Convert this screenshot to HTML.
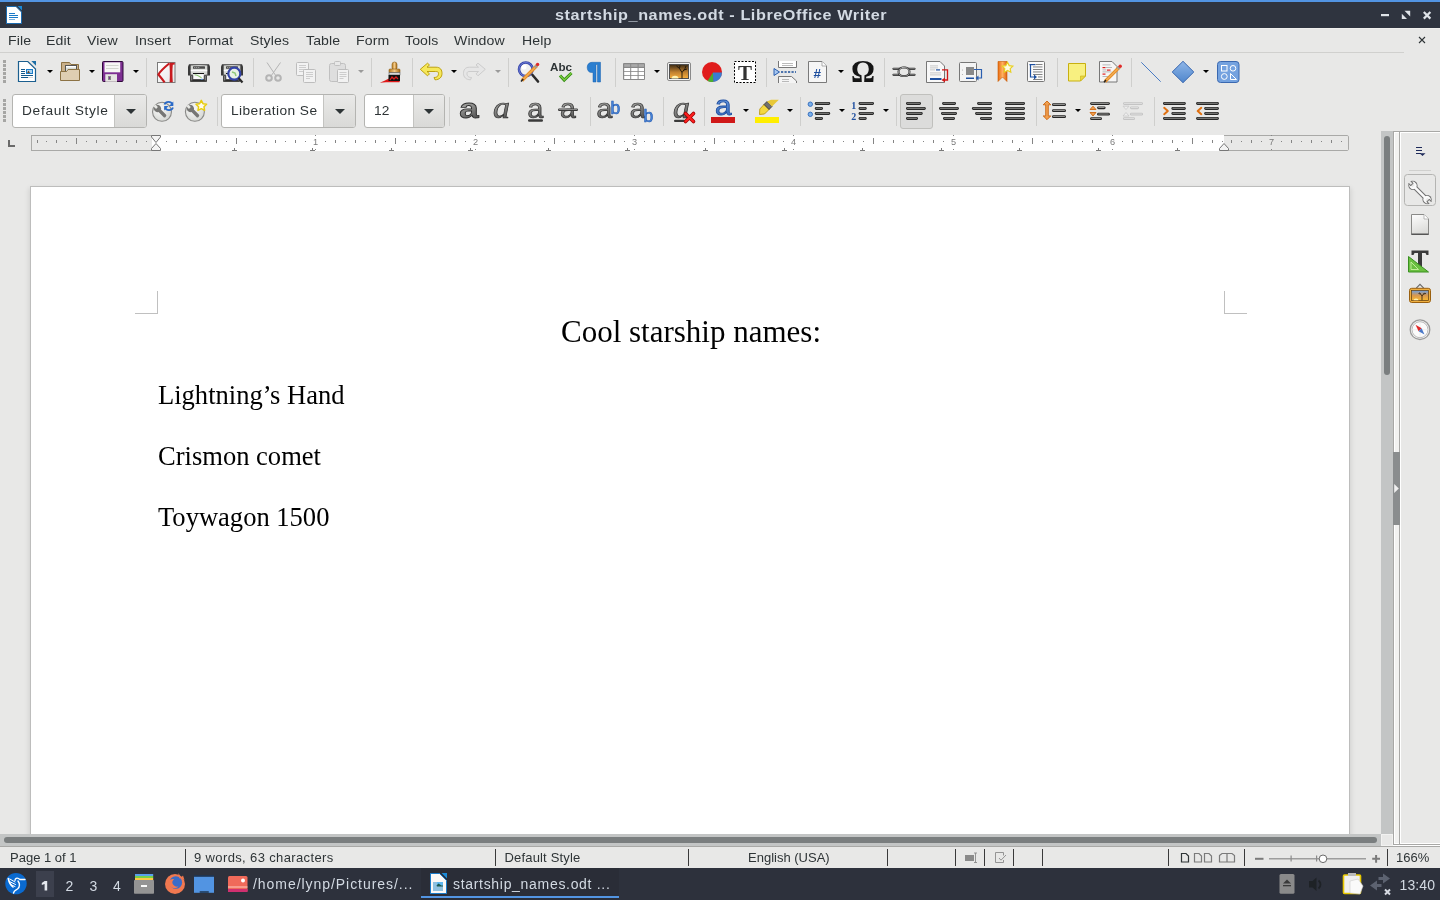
<!DOCTYPE html>
<html><head><meta charset="utf-8">
<style>
*{margin:0;padding:0;box-sizing:border-box}
html,body{width:1440px;height:900px;overflow:hidden;background:#e8e8e7;font-family:"Liberation Sans",sans-serif;position:relative}
.a{position:absolute;white-space:nowrap}
#topline{left:0;top:0;width:1440px;height:2px;background:#5294e2}
#title{left:0;top:2px;width:1440px;height:26px;background:#2f343f}
#title .t{left:554.5px;top:5.3px;color:#d3dae3;font-weight:bold;font-size:14px;letter-spacing:0.5px;transform:scaleX(1.156);transform-origin:0 0}
.mi{top:33px;font-size:13px;color:#2e3436;letter-spacing:0.1px;transform:scaleX(1.085);transform-origin:0 0}
#mline{left:0;top:52px;width:1404px;height:1px;background:#d0d0ce}
.sep{width:1px;background:#d2d2d0}
.ssep{width:1px;background:#3a3a3a;top:849px;height:17px}
.st{top:849.7px;font-size:13px;color:#2e3436}
.combo{height:34px;background:#fff;border:1px solid #b4b4b1;border-radius:3px;overflow:hidden}
.combo .btn{position:absolute;top:0;bottom:0;right:0;background:linear-gradient(#e9e9e8,#d9d9d7);border-left:1px solid #c4c4c1}
.combo .arr{position:absolute;top:14px;left:50%;margin-left:-5px;width:0;height:0;border-left:5px solid transparent;border-right:5px solid transparent;border-top:5px solid #2e3436}
.ct{font-size:12.5px;color:#2e3436;transform:scaleX(1.1);transform-origin:0 0}
.dt{font-family:"Liberation Serif",serif;font-size:26.56px;color:#000}
#taskbar{left:0;top:868px;width:1440px;height:32px;background:#2d313c}
.tb{color:#d3dae3;font-size:14px;top:876px}
</style></head><body>
<div id="root" style="position:absolute;left:0;top:0;width:1440px;height:900px;will-change:transform;background:#e8e8e7">
<div id="topline" class="a"></div>
<div id="title" class="a"><div class="t a">startship_names.odt - LibreOffice Writer</div></div>

<span class="a mi" style="left:8px">File</span>
<span class="a mi" style="left:46px">Edit</span>
<span class="a mi" style="left:87px">View</span>
<span class="a mi" style="left:135px">Insert</span>
<span class="a mi" style="left:188px">Format</span>
<span class="a mi" style="left:250px">Styles</span>
<span class="a mi" style="left:306px">Table</span>
<span class="a mi" style="left:356px">Form</span>
<span class="a mi" style="left:405px">Tools</span>
<span class="a mi" style="left:454px">Window</span>
<span class="a mi" style="left:522px">Help</span>
<div id="mline" class="a"></div>

<!-- toolbar row 2 combos -->
<div class="a combo" style="left:12px;top:94px;width:135px"><div class="btn" style="width:32px"><div class="arr"></div></div></div>
<span class="a ct" style="left:22.3px;top:104px;letter-spacing:0.6px">Default Style</span>
<div class="a combo" style="left:221px;top:94px;width:135px"><div class="btn" style="width:32px"><div class="arr"></div></div></div>
<span class="a ct" style="left:231.2px;top:104px;letter-spacing:0.38px">Liberation Se</span>
<div class="a combo" style="left:364px;top:94px;width:81px"><div class="btn" style="width:31px"><div class="arr"></div></div></div>
<span class="a ct" style="left:374px;top:104px">12</span>
<!-- align-left pressed -->
<div class="a" style="left:900px;top:94px;width:33px;height:35px;border:1px solid #c0c0bd;border-radius:3px;background:#dcdcdb"></div>

<!-- ruler -->
<div class="a" style="left:31px;top:135px;width:1318px;height:16px;background:#fff"></div>
<div class="a" style="left:31px;top:135px;width:121px;height:16px;background:#e8e8e7;border:1px solid #a9a9a7;border-right:none"></div>
<div class="a" style="left:1224px;top:135px;width:125px;height:16px;background:#e8e8e7;border:1px solid #a9a9a7;border-left:none;border-radius:0 2px 2px 0"></div>

<!-- page -->
<div class="a" style="left:30px;top:186px;width:1320px;height:660px;background:#fff;border:1px solid #bdbdbc;box-shadow:0 3px 5px 1px rgba(0,0,0,0.10)"></div>
<div class="a" style="left:135px;top:313px;width:23px;height:1px;background:#c0c0c0"></div>
<div class="a" style="left:157px;top:291px;width:1px;height:23px;background:#c0c0c0"></div>
<div class="a" style="left:1224px;top:313px;width:23px;height:1px;background:#c0c0c0"></div>
<div class="a" style="left:1224px;top:291px;width:1px;height:23px;background:#c0c0c0"></div>
<div class="a dt" style="left:561px;top:314px;font-size:31px">Cool starship names:</div>
<div class="a dt" style="left:158px;top:380px">Lightning’s Hand</div>
<div class="a dt" style="left:158px;top:441px">Crismon comet</div>
<div class="a dt" style="left:158px;top:502px">Toywagon 1500</div>

<!-- vertical scrollbar -->
<div class="a" style="left:1381px;top:131px;width:12px;height:703px;background:#c3c5c5"></div>
<div class="a" style="left:1384px;top:136px;width:6px;height:239px;background:#7a7e7f;border-radius:3px"></div>
<div class="a" style="left:1393px;top:131px;width:47px;height:714px;background:#e8e8e7;border-left:1px solid #a8a8a6;border-top:1px solid #a8a8a6;border-bottom:1px solid #a8a8a6"></div>
<div class="a" style="left:1394px;top:132px;width:46px;height:712px;border-left:1px solid #fff;border-top:1px solid #fff;border-bottom:1px solid #fff"></div>
<div class="a" style="left:1395px;top:133px;width:4px;height:710px;background:#f2f2f1"></div>
<div class="a" style="left:1399px;top:131px;width:1px;height:713px;background:#a8a8a6"></div>
<div class="a" style="left:1400px;top:132px;width:1px;height:712px;background:#fff"></div>
<div class="a" style="left:1393px;top:452px;width:7px;height:73px;background:#8a8d8e"></div>
<svg class="a" style="left:1393px;top:452px" width="7" height="73"><path d="M1.2,32V41L5.8,36.5Z" fill="#f0f0f0"/></svg>
<!-- horizontal scrollbar -->
<div class="a" style="left:0;top:834px;width:1381px;height:12px;background:#c3c5c5"></div>
<div class="a" style="left:4px;top:837px;width:1373px;height:6px;background:#7a7e7f;border-radius:3px"></div>
<div class="a" style="left:1381px;top:834px;width:12px;height:12px;background:#e8e8e7;border:1px solid #f2f2f1"></div>
<div class="a" style="left:1393px;top:845px;width:47px;height:1px;background:#fff"></div>
<div class="a" style="left:0;top:846px;width:1440px;height:1px;background:#a8a8a6"></div>

<!-- status bar -->
<div class="a" style="left:0;top:847px;width:1440px;height:21px;background:#e8e8e7"></div>
<span class="a st" style="left:10px">Page 1 of 1</span>
<div class="a ssep" style="left:185px"></div>
<span class="a st" style="left:194px;letter-spacing:0.37px">9 words, 63 characters</span>
<div class="a ssep" style="left:495px"></div>
<span class="a st" style="left:504.5px;letter-spacing:0.17px">Default Style</span>
<div class="a ssep" style="left:688px"></div>
<span class="a st" style="left:748px">English (USA)</span>
<div class="a ssep" style="left:887px"></div>
<div class="a ssep" style="left:955px"></div>
<div class="a ssep" style="left:984px"></div>
<div class="a ssep" style="left:1013px"></div>
<div class="a ssep" style="left:1042px"></div>
<div class="a ssep" style="left:1168px"></div>
<div class="a ssep" style="left:1244px"></div>
<div class="a ssep" style="left:1387px"></div>
<span class="a st" style="left:1396px">166%</span>

<!-- taskbar -->
<div id="taskbar" class="a"></div>
<div class="a" style="left:36px;top:871px;width:18px;height:26px;background:#3c404d"></div>

<span class="a tb" style="left:65.5px;top:878.3px">2</span>
<span class="a tb" style="left:89.5px;top:878.3px">3</span>
<span class="a tb" style="left:113px;top:878.3px">4</span>
<span class="a tb" style="left:253px;letter-spacing:0.95px">/home/lynp/Pictures/...</span>
<div class="a" style="left:421px;top:868px;width:198px;height:32px;background:#2a2d37"></div>
<div class="a" style="left:421px;top:896px;width:198px;height:2px;background:#5294e2"></div>
<span class="a tb" style="left:453px;letter-spacing:0.69px">startship_names.odt ...</span>
<span class="a tb" style="left:1399.6px;letter-spacing:0.1px;top:877px">13:40</span>

<svg class="a" style="left:0;top:0" width="1440" height="900" viewBox="0 0 1440 900">
<defs>
 <linearGradient id="gPr" x1="0" y1="0" x2="1" y2="0"><stop offset="0" stop-color="#3a3a3a"/><stop offset="0.2" stop-color="#9a9a9a"/><stop offset="0.5" stop-color="#e8e8e8"/><stop offset="0.8" stop-color="#9a9a9a"/><stop offset="1" stop-color="#3a3a3a"/></linearGradient>
 <linearGradient id="gGold" x1="0" y1="0" x2="1" y2="0"><stop offset="0" stop-color="#b57a1e"/><stop offset="0.5" stop-color="#f3c987"/><stop offset="1" stop-color="#a86a10"/></linearGradient>
 <linearGradient id="gGrey" x1="0" y1="0" x2="0" y2="1"><stop offset="0" stop-color="#7c7c7c"/><stop offset="1" stop-color="#3c3c3c"/></linearGradient>
</defs>
<!-- toolbar handles -->
<g fill="#a6a6a4">
 <rect x="3" y="60" width="3" height="3"/><rect x="3" y="64" width="3" height="3"/><rect x="3" y="68" width="3" height="3"/><rect x="3" y="72" width="3" height="3"/><rect x="3" y="76" width="3" height="3"/><rect x="3" y="80" width="3" height="3"/>
 <rect x="3" y="99" width="3" height="3"/><rect x="3" y="103" width="3" height="3"/><rect x="3" y="107" width="3" height="3"/><rect x="3" y="111" width="3" height="3"/><rect x="3" y="115" width="3" height="3"/><rect x="3" y="119" width="3" height="3"/>
</g>
<!-- separators row1 -->
<g fill="#cfcfcd">
 <rect x="146" y="58" width="1" height="29"/><rect x="253" y="58" width="1" height="29"/><rect x="371" y="58" width="1" height="29"/><rect x="412" y="58" width="1" height="29"/><rect x="508" y="58" width="1" height="29"/><rect x="615" y="58" width="1" height="29"/><rect x="766" y="58" width="1" height="29"/><rect x="884" y="58" width="1" height="29"/><rect x="1057" y="58" width="1" height="29"/><rect x="1131" y="58" width="1" height="29"/>
 <rect x="217" y="97" width="1" height="29"/><rect x="449" y="97" width="1" height="29"/><rect x="590" y="97" width="1" height="29"/><rect x="663" y="97" width="1" height="29"/><rect x="704" y="97" width="1" height="29"/><rect x="800" y="97" width="1" height="29"/><rect x="896" y="97" width="1" height="29"/><rect x="1036" y="97" width="1" height="29"/><rect x="1154" y="97" width="1" height="29"/>
</g>
<!-- dropdown arrows row1 -->
<g fill="#000">
 <path d="M47,70h6l-3,3z"/><path d="M89,70h6l-3,3z"/><path d="M133,70h6l-3,3z"/><path d="M451,70h6l-3,3z"/><path d="M654,70h6l-3,3z"/><path d="M838,70h6l-3,3z"/><path d="M1203,70h6l-3,3z"/>
 <path d="M743,109h6l-3,3z"/><path d="M787,109h6l-3,3z"/><path d="M839,109h6l-3,3z"/><path d="M883,109h6l-3,3z"/><path d="M1075,109h6l-3,3z"/>
</g>
<g fill="#9a9a9a"><path d="M358,70h6l-3,3z"/><path d="M495,70h6l-3,3z"/></g>

<!-- new document -->
<path d="M18.5,61.5H27.8L35.5,69V81.5H18.5Z" fill="#fff" stroke="#1b5f8f" stroke-width="1.2"/>
<path d="M31.3,61H36V65.8Z" fill="#1b6ea6"/>
<g fill="#13598c"><rect x="21" y="69" width="4" height="1"/><rect x="21" y="71" width="4" height="1"/><rect x="21" y="73" width="4" height="1"/><rect x="21" y="75" width="12" height="1"/><rect x="21" y="77" width="7" height="1"/></g>
<rect x="28" y="77" width="5" height="1" fill="#d8d8d8"/>
<rect x="26" y="69" width="7" height="5" fill="#1a7cc8"/><rect x="27" y="70" width="5" height="3" fill="#a9d2ef"/><path d="M27,73L28.5,70.5L30,73Z" fill="#6a4a30"/>
<!-- open folder -->
<path d="M61.5,80V62.5H69.5L71,64.5H78.5V72" fill="#c9b08a" stroke="#8c7244"/>
<rect x="65.5" y="65.5" width="11" height="6" fill="#fff" stroke="#555"/>
<rect x="66" y="67.5" width="10" height="3" fill="#d8dcd6"/>
<path d="M60.5,71.5H66.5L68,69.5H79.5V80.5H60.5Z" fill="#dfceb2" stroke="#8c7244"/>
<!-- save -->
<rect x="102.5" y="61.5" width="20.5" height="20" rx="1" fill="#7d2f92" stroke="#2f0a3a"/>
<rect x="104.5" y="62.3" width="15.7" height="10" fill="#f6f6f4"/>
<rect x="106" y="65" width="12.5" height="0.8" fill="#c8ccc4"/><rect x="106" y="68" width="12.5" height="0.8" fill="#c8ccc4"/>
<rect x="105.3" y="74.2" width="11.7" height="7.6" fill="#e6e6e2"/>
<rect x="108" y="76" width="3" height="4" fill="#888"/><rect x="109" y="77" width="1" height="2" fill="#7d2f92"/>
<!-- pdf -->
<defs><linearGradient id="gPdf" x1="0" y1="0" x2="1" y2="1"><stop offset="0" stop-color="#ffffff"/><stop offset="1" stop-color="#e6e6e6"/></linearGradient></defs>
<rect x="157.5" y="62.5" width="17.5" height="20" fill="url(#gPdf)" stroke="#7a7a7a"/>
<path d="M169.3,62.8H174.7V64.5L172.8,64.8C172.3,70 172.3,76 172.8,82.2H169.6C170,76 170,70 169.3,62.8Z" fill="#c81a1e"/>
<path d="M169.2,63.5C165.5,66.5 160.8,70.5 158.4,74.5C160.5,77 162.8,79.8 164.6,82.3" stroke="#c81a1e" stroke-width="2.1" fill="none"/>
<!-- print -->
<g id="printer">
<path d="M189,64.3H209L210,66.5V75.6H188V66.5Z" fill="#3a3a3a"/>
<rect x="189.5" y="65.2" width="19" height="10" fill="url(#gPr)"/>
<rect x="190.8" y="65.5" width="16.4" height="9" fill="#d6d8d4"/>
<rect x="193" y="66.2" width="12" height="2.6" rx="0.6" fill="#4a4a4a"/>
<circle cx="194.8" cy="67.5" r="0.55" fill="#c8c8c8"/><circle cx="196.8" cy="67.5" r="0.55" fill="#c8c8c8"/><circle cx="198.8" cy="67.5" r="0.55" fill="#c8c8c8"/>
<rect x="190.8" y="69.7" width="16.4" height="1.6" fill="#fafafa"/>
<path d="M190.2,75.5H206.8V81.8H190.2Z" fill="#1e1e1e"/>
<rect x="191.2" y="76" width="1.2" height="4.5" fill="#9a9a9a"/><rect x="204.6" y="76" width="1.2" height="4.5" fill="#9a9a9a"/>
<rect x="193" y="73.1" width="11" height="1" fill="#000"/>
<rect x="193.2" y="74.1" width="10.6" height="5" fill="#fafafa"/>
<path d="M194.5,74.8L197,75.3L199.5,76.5L201.5,77.8" stroke="#90c878" stroke-width="1.1" fill="none"/>
<rect x="193" y="79.1" width="11" height="1.2" fill="#555"/>
<rect x="200.8" y="78.8" width="2" height="1" fill="#4a90e2"/>
</g>
<use href="#printer" x="33" y="0"/>
<circle cx="234.3" cy="73.7" r="6" fill="#e8f0e4" stroke="#3444a8" stroke-width="2.2"/>
<path d="M232,72L235,73L236,76" stroke="#8fc77a" stroke-width="1.5" fill="none"/>
<path d="M238.5,78L242.5,82.5" stroke="#2a2a2a" stroke-width="2.2"/>
<!-- cut (disabled) -->
<g stroke="#b4b4b4" fill="none" stroke-width="1">
 <path d="M267,62.5L276,76M280.5,62.5L271,76"/>
 <circle cx="269" cy="78" r="2.8" stroke-width="2"/><circle cx="278" cy="78" r="2.8" stroke-width="2"/>
</g>
<!-- copy (disabled) -->
<rect x="296.5" y="62.5" width="12" height="13" rx="1" fill="#f2f2f2" stroke="#bdbdbd"/>
<g fill="#c4c4c4"><rect x="299" y="65" width="7" height="0.8"/><rect x="299" y="67" width="7" height="0.8"/><rect x="299" y="69" width="7" height="0.8"/><rect x="299" y="71" width="4" height="0.8"/></g>
<rect x="303.5" y="69.5" width="12" height="13" rx="1" fill="#f2f2f2" stroke="#bdbdbd"/>
<g fill="#c4c4c4"><rect x="306" y="72" width="7" height="0.8"/><rect x="306" y="74" width="7" height="0.8"/><rect x="306" y="76" width="7" height="0.8"/><rect x="306" y="78" width="4" height="0.8"/></g>
<!-- paste (disabled) -->
<rect x="329.5" y="63.5" width="16" height="18" rx="2" fill="#dedede" stroke="#c0c0c0"/>
<rect x="334.5" y="61.5" width="6" height="4" rx="1" fill="#e8e8e8" stroke="#c0c0c0"/>
<rect x="337.5" y="69.5" width="11" height="13" rx="1" fill="#f2f2f2" stroke="#bdbdbd"/>
<g fill="#c4c4c4"><rect x="339.5" y="72" width="7" height="0.8"/><rect x="339.5" y="74" width="7" height="0.8"/><rect x="339.5" y="76" width="7" height="0.8"/><rect x="339.5" y="78" width="4" height="0.8"/></g>
<!-- clone brush -->
<path d="M379.8,82.8C383,81.5 386,80 389,78.5L400,79.5L399.5,82.3H386Z" fill="#e01818"/>
<rect x="392" y="62" width="5" height="8" rx="2.5" fill="url(#gGold)" stroke="#8a5a10" stroke-width="0.6"/>
<rect x="389" y="69" width="11" height="3.5" rx="1" fill="url(#gGold)" stroke="#8a5a10" stroke-width="0.6"/>
<rect x="389" y="72.5" width="11" height="2.5" fill="#d8d8d8" stroke="#444" stroke-width="0.5"/>
<rect x="388.5" y="75" width="11.5" height="6" fill="#111"/>
<path d="M390,80L392,77L394,79L396,77L398,79" stroke="#e02020" stroke-width="1.3" fill="none"/>
<!-- undo -->
<path d="M420.3,69.3L427.5,63.2L429.5,65L427,67.2H436C440.5,67.2 442,70 442,73.5C442,77 439.5,79.8 435,79.8L434,77.5C437.5,77.5 438.5,75.5 438.5,73.5C438.5,71.8 437.5,71.5 435.5,71.5H427L429.5,73.8L427.5,75.8Z" fill="#f6e85a" stroke="#b89a00" stroke-width="0.9"/>
<!-- redo disabled -->
<path d="M485.3,69.3L478,63.2L476,65L478.5,67.2H469.5C465,67.2 463.5,70 463.5,73.5C463.5,77 466,79.8 470.5,79.8L471.5,77.5C468,77.5 467,75.5 467,73.5C467,71.8 468,71.5 470,71.5H478.5L476,73.8L478,75.8Z" fill="#e6e6e6" stroke="#c8c8c8" stroke-width="0.9"/>
<!-- find & replace -->
<circle cx="525.8" cy="69.3" r="6.8" fill="#f0f0f0" stroke="#3444a8" stroke-width="2.6"/><circle cx="525.8" cy="69.3" r="6.8" fill="none" stroke="#7a88e0" stroke-width="0.8"/>
<circle cx="524" cy="67" r="2.5" fill="#fff"/>
<path d="M532.5,75L538,81.5" stroke="#2a2a2a" stroke-width="2.6" stroke-linecap="round"/>
<path d="M522,80.5L537,65.5" stroke="#e8902a" stroke-width="3.2"/>
<path d="M522,80.5L537,65.5" stroke="#f8c070" stroke-width="1"/>
<path d="M535.3,65.3L537,67" stroke="#9a9a9a" stroke-width="3.2"/><circle cx="537.6" cy="64.4" r="1.7" fill="#e02a2a"/>
<path d="M521,81.5L523.3,79" stroke="#222" stroke-width="1.5"/>
<!-- spelling -->
<text x="550" y="71" font-family="Liberation Sans" font-weight="bold" font-size="11.6" fill="#2e3436" textLength="22" lengthAdjust="spacingAndGlyphs">Abc</text>
<path d="M560,75.5L564.2,80L571.5,73" stroke="#2f8a10" stroke-width="3" fill="none"/>
<path d="M560,75.5L564.2,80L571.5,73" stroke="#7ccc40" stroke-width="1.4" fill="none"/>
<!-- pilcrow -->
<path d="M592,62.3H600.5V82H597.5V64.5H596V82H593V72.5H591.5C589,72.5 587.2,70.5 587.2,67.5C587.2,64.5 589,62.3 592,62.3Z" fill="#2a7ed0" stroke="#1660b0" stroke-width="0.5"/>
<!-- table -->
<rect x="623" y="63" width="22" height="17" rx="1" fill="#888"/>
<g fill="#fff"><rect x="624.2" y="68" width="6" height="3.2"/><rect x="631.2" y="68" width="6.4" height="3.2"/><rect x="638.6" y="68" width="5.4" height="3.2"/>
<rect x="624.2" y="72" width="6" height="3.2"/><rect x="631.2" y="72" width="6.4" height="3.2"/><rect x="638.6" y="72" width="5.4" height="3.2"/>
<rect x="624.2" y="76" width="6" height="3"/><rect x="631.2" y="76" width="6.4" height="3"/><rect x="638.6" y="76" width="5.4" height="3"/></g>
<g fill="#aaa"><rect x="624.2" y="64.2" width="6" height="2.6"/><rect x="631.2" y="64.2" width="6.4" height="2.6"/><rect x="638.6" y="64.2" width="5.4" height="2.6"/></g>
<!-- image -->
<defs><linearGradient id="gSun" x1="0" y1="0" x2="0" y2="1"><stop offset="0" stop-color="#3a2a14"/><stop offset="0.55" stop-color="#c08030"/><stop offset="1" stop-color="#f8b040"/></linearGradient></defs>
<rect x="667.5" y="62.5" width="23" height="18" rx="1.5" fill="#f4f4f4" stroke="#8a8a8a"/>
<rect x="669.5" y="64.5" width="19" height="14" fill="url(#gSun)" stroke="#505050"/>
<path d="M671.5,78.5A3.5,2.8 0 0 1 678.5,78.5Z" fill="#fff2b0"/>
<path d="M682,78.5V72.5L679.5,68.5L676.5,66M682,72.5L685,68.5L686,66M679.5,68.5L680,65.5M684,70L687,69" stroke="#1a1208" stroke-width="0.9" fill="none"/>
<!-- chart -->
<circle cx="712" cy="72" r="10" fill="#e01c1c"/>
<path d="M713,72.5H722A9.5,9.5 0 0 1 713.2,82Z" fill="#3a7dd0"/>
<path d="M713,72.5L713.2,82A10,10 0 0 1 707.5,81Z" fill="#48b030"/>
<!-- textbox -->
<rect x="734.5" y="61.5" width="21" height="21" fill="#fff" stroke="#000" stroke-dasharray="2,1.5"/>
<text x="745" y="80" font-family="Liberation Serif" font-weight="bold" font-size="21" fill="#333" text-anchor="middle">T</text>
<!-- page break -->
<path d="M778.5,61V67.5H796.5V61" fill="#fff" stroke="#777"/>
<rect x="782" y="63" width="11" height="0.8" fill="#aaa"/><rect x="782" y="65" width="11" height="0.8" fill="#aaa"/>
<path d="M778.5,83V76.5H791.5L796.5,81V83" fill="#f4f4f4" stroke="#777"/>
<rect x="782" y="79" width="7" height="0.8" fill="#aaa"/><rect x="782" y="81" width="7" height="0.8" fill="#aaa"/>
<path d="M774,68.5L779.5,72L774,75.5Z" fill="#a8c8f0" stroke="#2a5eb0"/>
<path d="M781,72H796" stroke="#1a4e9a" stroke-width="1.6" stroke-dasharray="2.2,1.3"/>
<!-- field -->
<path d="M808.5,61.5H822L826.5,66V82.5H808.5Z" fill="#f6f6f6" stroke="#7a7a7a"/>
<path d="M822,61.5V66H826.5" fill="#fff" stroke="#999" stroke-width="0.8"/>
<text x="817.3" y="78.3" font-family="Liberation Sans" font-weight="bold" font-size="13.5" fill="#1e4e9e" text-anchor="middle">#</text>
<!-- omega -->
<text transform="translate(863.1,82) scale(0.95,1)" font-family="Liberation Serif" font-weight="bold" font-size="31.5" fill="#151515" text-anchor="middle">Ω</text>
<!-- hyperlink -->
<g fill="none" stroke-linecap="round">
<path d="M893.5,68.8H899.5M893.5,74.8H899.5M908.5,68.8H914.5M908.5,74.8H914.5" stroke="#2a2a2a" stroke-width="2.2"/>
<path d="M893.5,68.8H899.5M893.5,74.8H899.5M908.5,68.8H914.5M908.5,74.8H914.5" stroke="#b8b8b8" stroke-width="0.7"/>
<rect x="898.5" y="67.5" width="11" height="8.6" rx="4.3" stroke="#2a2a2a" stroke-width="2"/>
<rect x="898.5" y="67.5" width="11" height="8.6" rx="4.3" stroke="#c8c8c8" stroke-width="0.7"/>
</g>
<!-- footnote -->
<path d="M926.5,61.5H940L944.5,66V82.5H926.5Z" fill="#f8f8f8" stroke="#777"/>
<g fill="#bbb"><rect x="930" y="65.5" width="8" height="0.8"/><rect x="930" y="67.5" width="8" height="0.8"/><rect x="930" y="69.5" width="5" height="0.8"/><rect x="930" y="72.5" width="11" height="0.8"/><rect x="930" y="74.5" width="11" height="0.8"/></g>
<rect x="936" y="69.3" width="4" height="1.2" fill="#1e50a0"/>
<rect x="930" y="78" width="11.5" height="2" fill="#1e50a0"/>
<path d="M942,69.8H947.5V80H944" stroke="#d01818" stroke-width="1.3" fill="none"/>
<path d="M941.5,80L945,77.5V82.5Z" fill="#d01818"/>
<!-- caption -->
<rect x="959.5" y="62.5" width="17" height="19" rx="1" fill="#f4f4f4" stroke="#777"/>
<rect x="966" y="67" width="8" height="8" fill="#888"/>
<rect x="966" y="77.5" width="8" height="1.5" fill="#1e50a0"/>
<circle cx="962.5" cy="70" r="0.6" fill="#aaa"/><circle cx="962.5" cy="74.5" r="0.6" fill="#aaa"/>
<path d="M974,69.5H981.5V78H977" stroke="#2a5eb0" stroke-width="1.2" fill="none"/>
<path d="M975.5,78L978.5,75.5V80.5Z" fill="#2a5eb0"/>
<!-- bookmark -->
<defs><linearGradient id="gOr" x1="0" y1="0" x2="1" y2="0"><stop offset="0" stop-color="#e86a10"/><stop offset="0.5" stop-color="#ffb060"/><stop offset="1" stop-color="#e06010"/></linearGradient></defs>
<path d="M998,61.5H1007V81.5L1002.5,77L998,81.5Z" fill="url(#gOr)" stroke="#c85a00" stroke-width="0.6"/>
<path d="M1007.5,62.3L1009.2,65.6L1012.8,66.1L1010.2,68.6L1010.8,72.2L1007.5,70.5L1004.2,72.2L1004.8,68.6L1002.2,66.1L1005.8,65.6Z" fill="#fffbe0" stroke="#e8d020" stroke-width="1.2"/>
<!-- crossref -->
<rect x="1027.5" y="61.5" width="17" height="20" rx="1" fill="#fafafa" stroke="#777"/>
<rect x="1029.5" y="64" width="6" height="1.2" fill="#1e50a0"/>
<g fill="#777"><rect x="1036" y="64" width="6.5" height="0.9"/><rect x="1033" y="66.5" width="9.5" height="0.9"/><rect x="1033" y="69" width="9.5" height="0.9"/><rect x="1033" y="71.5" width="9.5" height="0.9"/><rect x="1033" y="74" width="9.5" height="0.9"/><rect x="1038" y="76.5" width="4.5" height="0.9"/><rect x="1033" y="79" width="9.5" height="0.9"/></g>
<path d="M1030.5,65V77H1035" stroke="#1e50a0" stroke-width="1.2" fill="none"/>
<path d="M1037,77L1034,74.5V79.5Z" fill="#1e50a0"/>
<!-- comment -->
<path d="M1068.5,63.5H1085.5V76L1080.5,81H1068.5Z" fill="#f8f080" stroke="#c8b010"/>
<path d="M1085.5,76H1080.5V81Z" fill="#e8d840" stroke="#c8b010" stroke-width="0.6"/>
<!-- track changes -->
<path d="M1099.5,61.5H1112L1117,66.5V82H1099.5Z" fill="#f6f6f6" stroke="#777"/>
<g fill="#e02020"><rect x="1102.5" y="67" width="3" height="1.2"/><rect x="1107" y="69.5" width="3.5" height="1.2"/><rect x="1102.5" y="73.5" width="3" height="1.2"/></g>
<g fill="#aaa"><rect x="1102.5" y="64.5" width="8" height="0.8"/><rect x="1106" y="67" width="6" height="0.8"/><rect x="1102.5" y="69.5" width="4" height="0.8"/><rect x="1102.5" y="71.5" width="9" height="0.8"/><rect x="1102.5" y="76" width="7" height="0.8"/></g>
<path d="M1105,81.5L1119.5,67" stroke="#e8902a" stroke-width="3.2"/>
<path d="M1105,81.5L1119.5,67" stroke="#f8c070" stroke-width="1"/>
<path d="M1117.8,68.7L1119.2,67.3" stroke="#9a9a9a" stroke-width="3.2"/><circle cx="1120.2" cy="66.3" r="1.7" fill="#e02a2a"/>
<path d="M1104,82.3L1106,80" stroke="#222" stroke-width="1.5"/>
<!-- line -->
<path d="M1141.3,62.3L1160.7,81.7" stroke="#4a7cc4" stroke-width="1"/>
<!-- diamond -->
<defs><linearGradient id="gBl" x1="0" y1="0" x2="0" y2="1"><stop offset="0" stop-color="#8fb6e8"/><stop offset="1" stop-color="#4f86cc"/></linearGradient></defs>
<path d="M1183,61.3L1193.8,72L1183,82.7L1172.2,72Z" fill="url(#gBl)" stroke="#3a68b0"/>
<!-- shapes -->
<rect x="1217.5" y="61.5" width="21.5" height="21" rx="3" fill="#74a2df" stroke="#3a68b0"/>
<g fill="none" stroke="#fff" stroke-width="1"><rect x="1221.5" y="65.5" width="5.5" height="5.5"/><circle cx="1233" cy="68.3" r="2.8"/><circle cx="1224.3" cy="76.5" r="2.9"/><path d="M1230.5,73.5V79.5H1236.5Z"/></g>
<defs>
 <linearGradient id="gA" x1="0" y1="0" x2="0.3" y2="1"><stop offset="0" stop-color="#5a5a58"/><stop offset="0.45" stop-color="#9c9c9a"/><stop offset="1" stop-color="#505050"/></linearGradient>
 <linearGradient id="gAb" x1="0" y1="0" x2="0" y2="1"><stop offset="0" stop-color="#7aa8e8"/><stop offset="1" stop-color="#2a62b8"/></linearGradient>
 <radialGradient id="gCirc" cx="0.4" cy="0.35" r="0.7"><stop offset="0" stop-color="#fafafa"/><stop offset="1" stop-color="#d4d6d2"/></radialGradient>
</defs>
<!-- update style -->
<circle cx="162" cy="111.8" r="9.5" fill="url(#gCirc)" stroke="#8a8a88" stroke-width="1.1"/>
<g transform="translate(161.5,112.5) rotate(45)" fill="#767674"><rect x="-5" y="-1.7" width="11" height="3.4" rx="1.5"/><path d="M-5,-3.6A3.6,3.6 0 1 0 -5,3.6L-5,3.6Z"/><circle cx="-5.5" cy="0" r="3.4"/></g><g transform="translate(161.5,112.5) rotate(45)" fill="#e6e7e4"><rect x="-10" y="-1.3" width="3.6" height="2.6"/></g>
<path d="M164.5,104.5A4.3,4.3 0 0 1 172.5,104.5" stroke="#2a6ac8" stroke-width="1.8" fill="none"/>
<path d="M173.3,101.5V106H169Z" fill="#2a6ac8"/>
<path d="M173,107.5A4.3,4.3 0 0 1 165,107.5" stroke="#2a6ac8" stroke-width="1.8" fill="none"/>
<path d="M164.2,110.5V106H168.5Z" fill="#2a6ac8"/>
<!-- new style -->
<circle cx="194.9" cy="111.8" r="9.5" fill="url(#gCirc)" stroke="#8a8a88" stroke-width="1.1"/>
<g transform="translate(194.4,112.5) rotate(45)" fill="#767674"><rect x="-5" y="-1.7" width="11" height="3.4" rx="1.5"/><path d="M-5,-3.6A3.6,3.6 0 1 0 -5,3.6L-5,3.6Z"/><circle cx="-5.5" cy="0" r="3.4"/></g><g transform="translate(194.4,112.5) rotate(45)" fill="#e6e7e4"><rect x="-10" y="-1.3" width="3.6" height="2.6"/></g>
<path d="M201.3,100.3L203,103.7L206.6,104.2L204,106.8L204.6,110.4L201.3,108.7L198,110.4L198.6,106.8L196,104.2L199.6,103.7Z" fill="#fffde8" stroke="#e8cc10" stroke-width="1.5" stroke-linejoin="round"/>
<!-- bold a -->
<text transform="translate(459.2,117.6) scale(1.27,1)" font-family="Liberation Sans" font-weight="bold" font-size="27.5" fill="url(#gA)" stroke="#2e2e2e" stroke-width="0.8">a</text>
<!-- italic a -->
<text transform="translate(493,117.6) scale(1.06,1)" font-family="Liberation Serif" font-style="italic" font-size="32" fill="url(#gA)" stroke="#2e2e2e" stroke-width="0.7">a</text>
<!-- underline a -->
<text transform="translate(527.5,117.6) scale(1.05,1)" font-family="Liberation Sans" font-size="27" fill="url(#gA)" stroke="#2e2e2e" stroke-width="0.7">a</text>
<rect x="528" y="119.3" width="15" height="2.4" rx="1.2" fill="#3a3a3a"/>
<!-- strike a -->
<text transform="translate(560,117.6) scale(1.05,1)" font-family="Liberation Sans" font-size="27" fill="url(#gA)" stroke="#2e2e2e" stroke-width="0.7">a</text>
<rect x="558" y="108.5" width="20" height="2.4" rx="1.2" fill="#3a3a3a"/>
<rect x="559" y="109" width="18" height="0.8" fill="#9a9a9a"/>
<!-- superscript -->
<text transform="translate(596.5,117.6) scale(1.05,1)" font-family="Liberation Sans" font-size="27" fill="url(#gA)" stroke="#2e2e2e" stroke-width="0.7">a</text>
<text transform="translate(610.5,113.5) scale(0.95,1)" font-family="Liberation Sans" font-size="18.5" fill="#4a86d8" stroke="#1e56b0" stroke-width="0.6">b</text>
<!-- subscript -->
<text transform="translate(629.8,117.6) scale(1.05,1)" font-family="Liberation Sans" font-size="27" fill="url(#gA)" stroke="#2e2e2e" stroke-width="0.7">a</text>
<text transform="translate(643.5,121.8) scale(0.95,1)" font-family="Liberation Sans" font-size="18.5" fill="#4a86d8" stroke="#1e56b0" stroke-width="0.6">b</text>
<!-- clear formatting -->
<text transform="translate(673,117.6) scale(1.06,1)" font-family="Liberation Serif" font-style="italic" font-size="32" fill="url(#gA)" stroke="#2e2e2e" stroke-width="0.7">a</text>
<rect x="674" y="119.8" width="11" height="2.2" rx="1.1" fill="#3a3a3a"/>
<path d="M685.5,113.5L693.5,121.5M693.5,113.5L685.5,121.5" stroke="#a00000" stroke-width="3.6" stroke-linecap="round"/>
<path d="M685.5,113.5L693.5,121.5M693.5,113.5L685.5,121.5" stroke="#ff2020" stroke-width="2" stroke-linecap="round"/>
<!-- font color -->
<text transform="translate(715,114.8) scale(1.1,1)" font-family="Liberation Sans" font-size="27" fill="url(#gAb)" stroke="#1e4ea0" stroke-width="0.8">a</text>
<rect x="711" y="117" width="24" height="6" fill="#d01818"/>
<!-- highlighting -->
<path d="M759.5,114.5L759.8,109L764.5,104L769.5,109L764.5,114Z" fill="#f4d840" stroke="#b89000" stroke-width="0.8"/>
<path d="M764,104.5L767,101.5L772,106.5L769,109.5Z" fill="#707070" stroke="#303030" stroke-width="0.8"/>
<path d="M767,101.5L771,99.8H778.8L772,106.5Z" fill="#e8c838"/>
<rect x="755" y="117" width="24" height="6" fill="#ffee00"/>

<rect x="814.8" y="102.1" width="15.4" height="2.8" rx="1.4" fill="#262626"/>
<rect x="815.8" y="102.8" width="13.4" height="1.0" rx="0.5" fill="#8e8e8c"/>
<rect x="814.8" y="107.1" width="8.2" height="2.8" rx="1.4" fill="#262626"/>
<rect x="815.8" y="107.8" width="6.2" height="1.0" rx="0.5" fill="#8e8e8c"/>
<rect x="814.8" y="112.1" width="15.4" height="2.8" rx="1.4" fill="#262626"/>
<rect x="815.8" y="112.8" width="13.4" height="1.0" rx="0.5" fill="#8e8e8c"/>
<rect x="814.8" y="117.1" width="8.2" height="2.8" rx="1.4" fill="#262626"/>
<rect x="815.8" y="117.8" width="6.2" height="1.0" rx="0.5" fill="#8e8e8c"/>
<g fill="#7ab0ea" stroke="#3a72c0" stroke-width="1"><circle cx="810.3" cy="104.2" r="2.2"/><circle cx="810.3" cy="114.3" r="2.2"/></g>
<rect x="858.6" y="102.1" width="15.4" height="2.8" rx="1.4" fill="#262626"/>
<rect x="859.6" y="102.8" width="13.4" height="1.0" rx="0.5" fill="#8e8e8c"/>
<rect x="858.6" y="107.1" width="8.1" height="2.8" rx="1.4" fill="#262626"/>
<rect x="859.6" y="107.8" width="6.1" height="1.0" rx="0.5" fill="#8e8e8c"/>
<rect x="858.6" y="112.1" width="15.4" height="2.8" rx="1.4" fill="#262626"/>
<rect x="859.6" y="112.8" width="13.4" height="1.0" rx="0.5" fill="#8e8e8c"/>
<rect x="858.6" y="117.1" width="8.1" height="2.8" rx="1.4" fill="#262626"/>
<rect x="859.6" y="117.8" width="6.1" height="1.0" rx="0.5" fill="#8e8e8c"/>
<text x="853.8" y="108.8" font-family="Liberation Serif" font-weight="bold" font-size="10" fill="#2050a0" text-anchor="middle">1</text>
<text x="853.8" y="120" font-family="Liberation Serif" font-weight="bold" font-size="10" fill="#2050a0" text-anchor="middle">2</text>
<rect x="906.0" y="102.1" width="15.0" height="2.8" rx="1.4" fill="#262626"/>
<rect x="907.0" y="102.8" width="13.0" height="1.0" rx="0.5" fill="#8e8e8c"/>
<rect x="906.0" y="107.1" width="19.8" height="2.8" rx="1.4" fill="#262626"/>
<rect x="907.0" y="107.8" width="17.8" height="1.0" rx="0.5" fill="#8e8e8c"/>
<rect x="906.0" y="112.1" width="16.7" height="2.8" rx="1.4" fill="#262626"/>
<rect x="907.0" y="112.8" width="14.7" height="1.0" rx="0.5" fill="#8e8e8c"/>
<rect x="906.0" y="117.1" width="12.0" height="2.8" rx="1.4" fill="#262626"/>
<rect x="907.0" y="117.8" width="10.0" height="1.0" rx="0.5" fill="#8e8e8c"/>
<rect x="942.1" y="102.1" width="13.9" height="2.8" rx="1.4" fill="#262626"/>
<rect x="943.1" y="102.8" width="11.9" height="1.0" rx="0.5" fill="#8e8e8c"/>
<rect x="939.0" y="107.1" width="19.9" height="2.8" rx="1.4" fill="#262626"/>
<rect x="940.0" y="107.8" width="17.9" height="1.0" rx="0.5" fill="#8e8e8c"/>
<rect x="941.0" y="112.1" width="16.0" height="2.8" rx="1.4" fill="#262626"/>
<rect x="942.0" y="112.8" width="14.0" height="1.0" rx="0.5" fill="#8e8e8c"/>
<rect x="943.0" y="117.1" width="12.0" height="2.8" rx="1.4" fill="#262626"/>
<rect x="944.0" y="117.8" width="10.0" height="1.0" rx="0.5" fill="#8e8e8c"/>
<rect x="977.1" y="102.1" width="14.9" height="2.8" rx="1.4" fill="#262626"/>
<rect x="978.1" y="102.8" width="12.9" height="1.0" rx="0.5" fill="#8e8e8c"/>
<rect x="971.9" y="107.1" width="20.1" height="2.8" rx="1.4" fill="#262626"/>
<rect x="972.9" y="107.8" width="18.1" height="1.0" rx="0.5" fill="#8e8e8c"/>
<rect x="975.1" y="112.1" width="16.9" height="2.8" rx="1.4" fill="#262626"/>
<rect x="976.1" y="112.8" width="14.9" height="1.0" rx="0.5" fill="#8e8e8c"/>
<rect x="980.0" y="117.1" width="12.0" height="2.8" rx="1.4" fill="#262626"/>
<rect x="981.0" y="117.8" width="10.0" height="1.0" rx="0.5" fill="#8e8e8c"/>
<rect x="1005.0" y="102.1" width="20.0" height="2.8" rx="1.4" fill="#262626"/>
<rect x="1006.0" y="102.8" width="18.0" height="1.0" rx="0.5" fill="#8e8e8c"/>
<rect x="1005.0" y="107.1" width="20.0" height="2.8" rx="1.4" fill="#262626"/>
<rect x="1006.0" y="107.8" width="18.0" height="1.0" rx="0.5" fill="#8e8e8c"/>
<rect x="1005.0" y="112.1" width="20.0" height="2.8" rx="1.4" fill="#262626"/>
<rect x="1006.0" y="112.8" width="18.0" height="1.0" rx="0.5" fill="#8e8e8c"/>
<rect x="1005.0" y="117.1" width="20.0" height="2.8" rx="1.4" fill="#262626"/>
<rect x="1006.0" y="117.8" width="18.0" height="1.0" rx="0.5" fill="#8e8e8c"/>
<rect x="1052.0" y="103.3" width="14.0" height="2.8" rx="1.4" fill="#262626"/>
<rect x="1053.0" y="104.0" width="12.0" height="1.0" rx="0.5" fill="#8e8e8c"/>
<rect x="1052.0" y="109.3" width="14.0" height="2.8" rx="1.4" fill="#262626"/>
<rect x="1053.0" y="110.0" width="12.0" height="1.0" rx="0.5" fill="#8e8e8c"/>
<rect x="1052.0" y="115.3" width="14.0" height="2.8" rx="1.4" fill="#262626"/>
<rect x="1053.0" y="116.0" width="12.0" height="1.0" rx="0.5" fill="#8e8e8c"/>
<path d="M1047,101L1050.8,104.8H1048.3V115.9H1050.8L1047,119.7L1043.2,115.9H1045.7V104.8H1043.2Z" fill="#f0a050" stroke="#c85a00" stroke-width="0.8"/>
<rect x="1090.1" y="102.2" width="19.8" height="2.8" rx="1.4" fill="#262626"/>
<rect x="1091.1" y="102.9" width="17.8" height="1.0" rx="0.5" fill="#8e8e8c"/>
<rect x="1097.1" y="106.4" width="8.5" height="2.8" rx="1.4" fill="#262626"/>
<rect x="1098.1" y="107.1" width="6.5" height="1.0" rx="0.5" fill="#8e8e8c"/>
<rect x="1097.1" y="112.8" width="12.8" height="2.8" rx="1.4" fill="#262626"/>
<rect x="1098.1" y="113.5" width="10.8" height="1.0" rx="0.5" fill="#8e8e8c"/>
<rect x="1090.1" y="117.3" width="11.9" height="2.8" rx="1.4" fill="#262626"/>
<rect x="1091.1" y="118.0" width="9.9" height="1.0" rx="0.5" fill="#8e8e8c"/>
<path d="M1093,106.2L1096,109.5H1090Z" fill="#f0a050" stroke="#c85a00" stroke-width="0.8"/>
<path d="M1093,116L1096,112.5H1090Z" fill="#f0a050" stroke="#c85a00" stroke-width="0.8"/>
<rect x="1123.0" y="102.2" width="20.0" height="2.8" rx="1.4" fill="#c4c4c4"/>
<rect x="1124.0" y="103.0" width="18.0" height="0.9" fill="#e0e0e0"/>
<rect x="1130.0" y="106.4" width="9.0" height="2.8" rx="1.4" fill="#c4c4c4"/>
<rect x="1131.0" y="107.2" width="7.0" height="0.9" fill="#e0e0e0"/>
<rect x="1130.0" y="112.8" width="13.0" height="2.8" rx="1.4" fill="#c4c4c4"/>
<rect x="1131.0" y="113.6" width="11.0" height="0.9" fill="#e0e0e0"/>
<rect x="1123.0" y="117.3" width="12.0" height="2.8" rx="1.4" fill="#c4c4c4"/>
<rect x="1124.0" y="118.1" width="10.0" height="0.9" fill="#e0e0e0"/>
<path d="M1126,109.5L1129,106.2H1123Z" fill="#eee" stroke="#c8c8c8" stroke-width="0.8"/>
<path d="M1126,112.5L1129,116H1123Z" fill="#eee" stroke="#c8c8c8" stroke-width="0.8"/>
<rect x="1163.0" y="102.1" width="22.8" height="2.8" rx="1.4" fill="#262626"/>
<rect x="1164.0" y="102.8" width="20.8" height="1.0" rx="0.5" fill="#8e8e8c"/>
<rect x="1171.4" y="107.1" width="14.4" height="2.8" rx="1.4" fill="#262626"/>
<rect x="1172.4" y="107.8" width="12.4" height="1.0" rx="0.5" fill="#8e8e8c"/>
<rect x="1171.4" y="112.1" width="14.4" height="2.8" rx="1.4" fill="#262626"/>
<rect x="1172.4" y="112.8" width="12.4" height="1.0" rx="0.5" fill="#8e8e8c"/>
<rect x="1163.0" y="117.1" width="22.8" height="2.8" rx="1.4" fill="#262626"/>
<rect x="1164.0" y="117.8" width="20.8" height="1.0" rx="0.5" fill="#8e8e8c"/>
<path d="M1164.2,107.8L1167.8,111L1164.2,114.2" stroke="#e07010" stroke-width="2" fill="none" stroke-linecap="round" stroke-linejoin="round"/>
<rect x="1196.1" y="102.1" width="22.8" height="2.8" rx="1.4" fill="#262626"/>
<rect x="1197.1" y="102.8" width="20.8" height="1.0" rx="0.5" fill="#8e8e8c"/>
<rect x="1204.2" y="107.1" width="14.7" height="2.8" rx="1.4" fill="#262626"/>
<rect x="1205.2" y="107.8" width="12.7" height="1.0" rx="0.5" fill="#8e8e8c"/>
<rect x="1204.2" y="112.1" width="14.7" height="2.8" rx="1.4" fill="#262626"/>
<rect x="1205.2" y="112.8" width="12.7" height="1.0" rx="0.5" fill="#8e8e8c"/>
<rect x="1196.1" y="117.1" width="22.8" height="2.8" rx="1.4" fill="#262626"/>
<rect x="1197.1" y="117.8" width="20.8" height="1.0" rx="0.5" fill="#8e8e8c"/>
<path d="M1201.3,107.8L1197.7,111L1201.3,114.2" stroke="#e07010" stroke-width="2" fill="none" stroke-linecap="round" stroke-linejoin="round"/>
<rect x="37" y="140" width="1" height="3" fill="#858585"/>
<rect x="46" y="141" width="1" height="1" fill="#858585"/>
<rect x="56" y="140" width="1" height="3" fill="#858585"/>
<rect x="66" y="141" width="1" height="1" fill="#858585"/>
<rect x="76" y="138" width="1" height="6" fill="#858585"/>
<rect x="86" y="141" width="1" height="1" fill="#858585"/>
<rect x="96" y="140" width="1" height="3" fill="#858585"/>
<rect x="106" y="141" width="1" height="1" fill="#858585"/>
<rect x="116" y="140" width="1" height="3" fill="#858585"/>
<rect x="126" y="141" width="1" height="1" fill="#858585"/>
<rect x="136" y="140" width="1" height="3" fill="#858585"/>
<rect x="146" y="141" width="1" height="1" fill="#858585"/>
<rect x="166" y="141" width="1" height="1" fill="#858585"/>
<rect x="176" y="140" width="1" height="3" fill="#858585"/>
<rect x="186" y="141" width="1" height="1" fill="#858585"/>
<rect x="196" y="140" width="1" height="3" fill="#858585"/>
<rect x="206" y="141" width="1" height="1" fill="#858585"/>
<rect x="216" y="140" width="1" height="3" fill="#858585"/>
<rect x="226" y="141" width="1" height="1" fill="#858585"/>
<rect x="236" y="138" width="1" height="6" fill="#858585"/>
<rect x="246" y="141" width="1" height="1" fill="#858585"/>
<rect x="256" y="140" width="1" height="3" fill="#858585"/>
<rect x="266" y="141" width="1" height="1" fill="#858585"/>
<rect x="275" y="140" width="1" height="3" fill="#858585"/>
<rect x="285" y="141" width="1" height="1" fill="#858585"/>
<rect x="295" y="140" width="1" height="3" fill="#858585"/>
<rect x="305" y="141" width="1" height="1" fill="#858585"/>
<text x="315.5" y="144.8" font-family="Liberation Sans" font-size="9.2" fill="#7a7a7a" text-anchor="middle">1</text>
<rect x="315" y="135" width="1" height="1" fill="#858585"/><rect x="315" y="149" width="1" height="1" fill="#858585"/>
<rect x="325" y="141" width="1" height="1" fill="#858585"/>
<rect x="335" y="140" width="1" height="3" fill="#858585"/>
<rect x="345" y="141" width="1" height="1" fill="#858585"/>
<rect x="355" y="140" width="1" height="3" fill="#858585"/>
<rect x="365" y="141" width="1" height="1" fill="#858585"/>
<rect x="375" y="140" width="1" height="3" fill="#858585"/>
<rect x="385" y="141" width="1" height="1" fill="#858585"/>
<rect x="395" y="138" width="1" height="6" fill="#858585"/>
<rect x="405" y="141" width="1" height="1" fill="#858585"/>
<rect x="415" y="140" width="1" height="3" fill="#858585"/>
<rect x="425" y="141" width="1" height="1" fill="#858585"/>
<rect x="435" y="140" width="1" height="3" fill="#858585"/>
<rect x="445" y="141" width="1" height="1" fill="#858585"/>
<rect x="455" y="140" width="1" height="3" fill="#858585"/>
<rect x="465" y="141" width="1" height="1" fill="#858585"/>
<text x="475.5" y="144.8" font-family="Liberation Sans" font-size="9.2" fill="#7a7a7a" text-anchor="middle">2</text>
<rect x="475" y="135" width="1" height="1" fill="#858585"/><rect x="475" y="149" width="1" height="1" fill="#858585"/>
<rect x="485" y="141" width="1" height="1" fill="#858585"/>
<rect x="495" y="140" width="1" height="3" fill="#858585"/>
<rect x="505" y="141" width="1" height="1" fill="#858585"/>
<rect x="514" y="140" width="1" height="3" fill="#858585"/>
<rect x="524" y="141" width="1" height="1" fill="#858585"/>
<rect x="534" y="140" width="1" height="3" fill="#858585"/>
<rect x="544" y="141" width="1" height="1" fill="#858585"/>
<rect x="554" y="138" width="1" height="6" fill="#858585"/>
<rect x="564" y="141" width="1" height="1" fill="#858585"/>
<rect x="574" y="140" width="1" height="3" fill="#858585"/>
<rect x="584" y="141" width="1" height="1" fill="#858585"/>
<rect x="594" y="140" width="1" height="3" fill="#858585"/>
<rect x="604" y="141" width="1" height="1" fill="#858585"/>
<rect x="614" y="140" width="1" height="3" fill="#858585"/>
<rect x="624" y="141" width="1" height="1" fill="#858585"/>
<text x="634.5" y="144.8" font-family="Liberation Sans" font-size="9.2" fill="#7a7a7a" text-anchor="middle">3</text>
<rect x="634" y="135" width="1" height="1" fill="#858585"/><rect x="634" y="149" width="1" height="1" fill="#858585"/>
<rect x="644" y="141" width="1" height="1" fill="#858585"/>
<rect x="654" y="140" width="1" height="3" fill="#858585"/>
<rect x="664" y="141" width="1" height="1" fill="#858585"/>
<rect x="674" y="140" width="1" height="3" fill="#858585"/>
<rect x="684" y="141" width="1" height="1" fill="#858585"/>
<rect x="694" y="140" width="1" height="3" fill="#858585"/>
<rect x="704" y="141" width="1" height="1" fill="#858585"/>
<rect x="714" y="138" width="1" height="6" fill="#858585"/>
<rect x="724" y="141" width="1" height="1" fill="#858585"/>
<rect x="734" y="140" width="1" height="3" fill="#858585"/>
<rect x="744" y="141" width="1" height="1" fill="#858585"/>
<rect x="753" y="140" width="1" height="3" fill="#858585"/>
<rect x="763" y="141" width="1" height="1" fill="#858585"/>
<rect x="773" y="140" width="1" height="3" fill="#858585"/>
<rect x="783" y="141" width="1" height="1" fill="#858585"/>
<text x="793.5" y="144.8" font-family="Liberation Sans" font-size="9.2" fill="#7a7a7a" text-anchor="middle">4</text>
<rect x="793" y="135" width="1" height="1" fill="#858585"/><rect x="793" y="149" width="1" height="1" fill="#858585"/>
<rect x="803" y="141" width="1" height="1" fill="#858585"/>
<rect x="813" y="140" width="1" height="3" fill="#858585"/>
<rect x="823" y="141" width="1" height="1" fill="#858585"/>
<rect x="833" y="140" width="1" height="3" fill="#858585"/>
<rect x="843" y="141" width="1" height="1" fill="#858585"/>
<rect x="853" y="140" width="1" height="3" fill="#858585"/>
<rect x="863" y="141" width="1" height="1" fill="#858585"/>
<rect x="873" y="138" width="1" height="6" fill="#858585"/>
<rect x="883" y="141" width="1" height="1" fill="#858585"/>
<rect x="893" y="140" width="1" height="3" fill="#858585"/>
<rect x="903" y="141" width="1" height="1" fill="#858585"/>
<rect x="913" y="140" width="1" height="3" fill="#858585"/>
<rect x="923" y="141" width="1" height="1" fill="#858585"/>
<rect x="933" y="140" width="1" height="3" fill="#858585"/>
<rect x="943" y="141" width="1" height="1" fill="#858585"/>
<text x="953.5" y="144.8" font-family="Liberation Sans" font-size="9.2" fill="#7a7a7a" text-anchor="middle">5</text>
<rect x="953" y="135" width="1" height="1" fill="#858585"/><rect x="953" y="149" width="1" height="1" fill="#858585"/>
<rect x="963" y="141" width="1" height="1" fill="#858585"/>
<rect x="973" y="140" width="1" height="3" fill="#858585"/>
<rect x="983" y="141" width="1" height="1" fill="#858585"/>
<rect x="992" y="140" width="1" height="3" fill="#858585"/>
<rect x="1002" y="141" width="1" height="1" fill="#858585"/>
<rect x="1012" y="140" width="1" height="3" fill="#858585"/>
<rect x="1022" y="141" width="1" height="1" fill="#858585"/>
<rect x="1032" y="138" width="1" height="6" fill="#858585"/>
<rect x="1042" y="141" width="1" height="1" fill="#858585"/>
<rect x="1052" y="140" width="1" height="3" fill="#858585"/>
<rect x="1062" y="141" width="1" height="1" fill="#858585"/>
<rect x="1072" y="140" width="1" height="3" fill="#858585"/>
<rect x="1082" y="141" width="1" height="1" fill="#858585"/>
<rect x="1092" y="140" width="1" height="3" fill="#858585"/>
<rect x="1102" y="141" width="1" height="1" fill="#858585"/>
<text x="1112.5" y="144.8" font-family="Liberation Sans" font-size="9.2" fill="#7a7a7a" text-anchor="middle">6</text>
<rect x="1112" y="135" width="1" height="1" fill="#858585"/><rect x="1112" y="149" width="1" height="1" fill="#858585"/>
<rect x="1122" y="141" width="1" height="1" fill="#858585"/>
<rect x="1132" y="140" width="1" height="3" fill="#858585"/>
<rect x="1142" y="141" width="1" height="1" fill="#858585"/>
<rect x="1152" y="140" width="1" height="3" fill="#858585"/>
<rect x="1162" y="141" width="1" height="1" fill="#858585"/>
<rect x="1172" y="140" width="1" height="3" fill="#858585"/>
<rect x="1182" y="141" width="1" height="1" fill="#858585"/>
<rect x="1192" y="138" width="1" height="6" fill="#858585"/>
<rect x="1202" y="141" width="1" height="1" fill="#858585"/>
<rect x="1212" y="140" width="1" height="3" fill="#858585"/>
<rect x="1222" y="141" width="1" height="1" fill="#858585"/>
<rect x="1231" y="140" width="1" height="3" fill="#858585"/>
<rect x="1241" y="141" width="1" height="1" fill="#858585"/>
<rect x="1251" y="140" width="1" height="3" fill="#858585"/>
<rect x="1261" y="141" width="1" height="1" fill="#858585"/>
<text x="1271.5" y="144.8" font-family="Liberation Sans" font-size="9.2" fill="#7a7a7a" text-anchor="middle">7</text>
<rect x="1271" y="135" width="1" height="1" fill="#858585"/><rect x="1271" y="149" width="1" height="1" fill="#858585"/>
<rect x="1281" y="141" width="1" height="1" fill="#858585"/>
<rect x="1291" y="140" width="1" height="3" fill="#858585"/>
<rect x="1301" y="141" width="1" height="1" fill="#858585"/>
<rect x="1311" y="140" width="1" height="3" fill="#858585"/>
<rect x="1321" y="141" width="1" height="1" fill="#858585"/>
<rect x="1331" y="140" width="1" height="3" fill="#858585"/>
<rect x="1341" y="141" width="1" height="1" fill="#858585"/>
<path d="M234.5,148V151M232,150.5H237" stroke="#7a7a7a" stroke-width="1"/>
<path d="M312.5,148V151M310,150.5H315" stroke="#7a7a7a" stroke-width="1"/>
<path d="M391.5,148V151M389,150.5H394" stroke="#7a7a7a" stroke-width="1"/>
<path d="M470.5,148V151M468,150.5H473" stroke="#7a7a7a" stroke-width="1"/>
<path d="M548.5,148V151M546,150.5H551" stroke="#7a7a7a" stroke-width="1"/>
<path d="M627.5,148V151M625,150.5H630" stroke="#7a7a7a" stroke-width="1"/>
<path d="M705.5,148V151M703,150.5H708" stroke="#7a7a7a" stroke-width="1"/>
<path d="M784.5,148V151M782,150.5H787" stroke="#7a7a7a" stroke-width="1"/>
<path d="M862.5,148V151M860,150.5H865" stroke="#7a7a7a" stroke-width="1"/>
<path d="M941.5,148V151M939,150.5H944" stroke="#7a7a7a" stroke-width="1"/>
<path d="M1019.5,148V151M1017,150.5H1022" stroke="#7a7a7a" stroke-width="1"/>
<path d="M1098.5,148V151M1096,150.5H1101" stroke="#7a7a7a" stroke-width="1"/>
<path d="M1177.5,148V151M1175,150.5H1180" stroke="#7a7a7a" stroke-width="1"/>
<path d="M151.5,135.5H160.5V137L156,142.5L151.5,137Z" fill="#f4f4f4" stroke="#777"/>
<path d="M156,143.5L160.5,148.5V150.5H151.5V148.5Z" fill="#f4f4f4" stroke="#777"/>
<path d="M1224,143.5L1228.5,148.5V150.5H1219.5V148.5Z" fill="#f4f4f4" stroke="#777"/>
<path d="M9,140V146H15" stroke="#6a6a6a" stroke-width="2" fill="none"/>
<!-- title bar LibreOffice icon -->
<path d="M6.5,6.5H16L21.5,12V23.5H6.5Z" fill="#fff" stroke="#1a6bb0" stroke-width="1"/>
<path d="M17.5,6H22V10.5Z" fill="#1a8ad8"/>
<g fill="#1a7ac8"><rect x="9" y="13" width="6" height="1"/><rect x="9" y="15" width="9" height="1"/><rect x="9" y="17" width="9" height="1"/><rect x="9" y="19" width="6" height="1" fill="#7ab0e0"/></g>
<!-- window controls -->
<rect x="1381" y="14" width="8" height="2.2" fill="#dfe3e8"/>
<path d="M1404.5,10.8H1410.2V16.5Z M1401.8,13.8L1407,19H1401.8Z" fill="#dfe3e8"/>
<path d="M1423.8,12L1430.4,18.6M1430.4,12L1423.8,18.6" stroke="#dfe3e8" stroke-width="2.2"/>
<rect x="0" y="28" width="1440" height="1" fill="#efefed"/>
<!-- menu close -->
<path d="M1419,37L1425,43M1425,37L1419,43" stroke="#2e3436" stroke-width="1.1"/>
<!-- sidebar -->
<g fill="#1e2a5a"><rect x="1416" y="147" width="6" height="1"/><rect x="1416" y="150" width="6" height="1"/><rect x="1416" y="153" width="5" height="1"/><path d="M1419.5,153.3H1425.5L1422.5,156Z"/></g>
<rect x="1409" y="170" width="22" height="1" fill="#d0d0ce"/>
<rect x="1404.5" y="174.5" width="31" height="31" rx="3" fill="none" stroke="#b4b4b2"/>
<g transform="translate(1420,192.5) rotate(45)">
 <g fill="#6e6e6e"><rect x="-9" y="-2.3" width="18" height="4.6"/><circle cx="-10" cy="0" r="4.6"/><circle cx="10" cy="0" r="4.6"/></g>
 <g fill="#fafafa"><rect x="-9" y="-1.3" width="18" height="2.6"/><circle cx="-10" cy="0" r="3.6"/><circle cx="10" cy="0" r="3.6"/></g>
 <g fill="#e8e8e7"><rect x="-16" y="-1.6" width="7" height="3.2"/><rect x="9" y="-1.6" width="7" height="3.2"/></g>
 <g stroke="#6e6e6e" stroke-width="1" fill="none"><path d="M-14.6,-1.6H-11.5V1.6H-14.6M14.6,-1.6H11.5V1.6H14.6"/></g>
</g>
<defs><linearGradient id="gPage" x1="0" y1="0" x2="0.3" y2="1"><stop offset="0" stop-color="#fdfdfd"/><stop offset="1" stop-color="#dcdcda"/></linearGradient></defs>
<path d="M1411.5,214.5H1424L1428.5,219V234.5H1411.5Z" fill="url(#gPage)" stroke="#8a8a88"/>
<path d="M1424,214.5V219H1428.5" fill="#fff" stroke="#aaa" stroke-width="0.8"/>
<rect x="1411.5" y="233.5" width="17" height="1.5" fill="#555"/>
<!-- T + triangle -->
<path d="M1411.5,250.5H1428.5V255H1426.5L1425.5,253H1422V270H1418V253H1414.5L1413.5,255H1411.5Z" fill="#3a3a3a"/>
<path d="M1408.5,256.5V272H1428.5Z" fill="#6ac040" stroke="#3a9020"/>
<path d="M1411,262V269.5H1418.5Z" fill="none" stroke="#c8f0a0" stroke-width="0.9"/>
<!-- picture frame -->
<path d="M1416.3,288.2L1420,284.3L1423.7,288.2" fill="none" stroke="#6a6a6a" stroke-width="1.1"/>
<defs><linearGradient id="gSun2" x1="0" y1="0" x2="0" y2="1"><stop offset="0" stop-color="#6a9ee0"/><stop offset="0.5" stop-color="#d89850"/><stop offset="1" stop-color="#f8b830"/></linearGradient></defs>
<rect x="1409.5" y="288.3" width="21" height="14.2" rx="2.2" fill="#f0b040" stroke="#9a6010"/>
<rect x="1411.6" y="290.4" width="16.8" height="10" fill="url(#gSun2)" stroke="#5a3a10" stroke-width="0.7"/>
<path d="M1413.5,300.2A2.5,1.8 0 0 1 1418.5,300.2Z" fill="#fff0b0"/>
<path d="M1422,300.2V296L1419.5,292.5M1422,296L1424.5,292.8M1420.5,294L1418.5,293.5M1423.5,294L1426,293.5" stroke="#2a1a08" stroke-width="0.8" fill="none"/>
<!-- compass -->
<circle cx="1420" cy="329.7" r="9.8" fill="#f8f8f8" stroke="#9a9a9a" stroke-width="1.3"/>
<circle cx="1420" cy="329.7" r="8" fill="#fbfbfb" stroke="#b8b8b8" stroke-width="1"/>
<path d="M1420,322V337.5M1412.3,329.7H1427.7" stroke="#e8e8e8" stroke-width="0.6"/>
<path d="M1415.5,324.8L1421.6,328.2L1418.6,331.2Z" fill="#e02828"/>
<path d="M1424.5,334.6L1421.6,328.2L1418.6,331.2Z" fill="#4a78c8"/>
<!-- status bar icons -->
<rect x="965" y="855" width="9" height="6" fill="#8a8a8a"/>
<path d="M975.5,853V862.5M974,853H977M974,862.5H977" stroke="#8a8a8a" stroke-width="0.9"/>
<path d="M1003.5,855.5V852.5H995.5V862.5H1003.5V860" fill="none" stroke="#8a8a8a" stroke-width="0.9"/>
<path d="M999,858L1001,860.2L1006,855" fill="none" stroke="#8a8a8a" stroke-width="0.9"/>
<path d="M1181.5,853.5H1186L1188.5,856V862H1181.5Z" fill="none" stroke="#2e3436" stroke-width="1.2"/>
<path d="M1194.5,853.5H1199L1201.5,856V862H1194.5ZM1204.5,853.5H1209L1211.5,856V862H1204.5Z" fill="none" stroke="#7a7a7a" stroke-width="1.2"/>
<path d="M1219.5,855.5L1222,853.5H1227V862H1219.5ZM1227,853.5H1232L1234.5,855.5V862H1227Z" fill="none" stroke="#7a7a7a" stroke-width="1.2"/>
<rect x="1255" y="857.8" width="8.5" height="2" fill="#7a7a7a"/>
<rect x="1269" y="858.2" width="97" height="1.2" fill="#8a8a8a"/>
<rect x="1290.5" y="855.5" width="1.2" height="6" fill="#8a8a8a"/>
<rect x="1316" y="855.5" width="1.2" height="6" fill="#8a8a8a"/>
<circle cx="1323" cy="858.8" r="3.8" fill="#fff" stroke="#6a6a6a" stroke-width="1"/>
<path d="M1372.2,858.8H1380M1376.1,854.9V862.7" stroke="#7a7a7a" stroke-width="2"/>
<!-- taskbar icons -->
<circle cx="16" cy="883.6" r="10.7" fill="#0a6ad0"/>
<g fill="none" stroke="#fff" stroke-linecap="round">
<path d="M15,880.5C15,878.5 17,877.5 18.5,878.5L20,879.5H25" stroke-width="1.3"/>
<path d="M18,881C20,883.5 20,887 17.5,889C16,890 14,890.5 13.5,893" stroke-width="1.4"/>
<path d="M8.3,878.5C9,882 10.5,885 13,887" stroke-width="1.6"/>
<path d="M9.5,881.5L15.5,884.5M10.5,884.5L15,886.5M9.8,879L15,882" stroke-width="1"/>
</g>
<path d="M44.6,881H47.2V890.5H44.6V883.9L41.8,885.1V882.9Z" fill="#e4e8ee"/>
<!-- files -->
<rect x="135" y="874" width="18.2" height="2" fill="#5aa0ec"/>
<rect x="135" y="876" width="18.2" height="2" fill="#78d048"/>
<rect x="135" y="878" width="18.2" height="2" fill="#ffc848"/>
<rect x="134" y="880" width="20" height="13.8" rx="0.8" fill="#949494"/>
<rect x="141" y="885" width="6" height="2" fill="#fafafa"/>
<!-- firefox -->
<circle cx="175" cy="884" r="10" fill="#f07850"/>
<circle cx="175.8" cy="882.5" r="6.3" fill="#3a6cc8"/>
<path d="M168,876L170.5,880C171.5,879 173,878.8 174,879.5C172.5,880.5 172,882 172.5,883.5C173.5,886 176,887 178.5,886.5C176.5,888.5 172.5,888.5 170.5,886.5C169,885 168.5,883 168.8,881Z" fill="#f07850"/>
<path d="M178.5,873L181,877.5L183,875.5L184.5,880C183,878.5 181,878 179.5,878.5C179,876.5 178.5,875 178.5,873Z" fill="#f07850"/>
<!-- blue folder -->
<rect x="194" y="875" width="20" height="17.8" fill="#5294e2"/>
<rect x="194" y="875" width="20" height="1.8" fill="#1e3450"/>
<rect x="199.5" y="891.2" width="9.5" height="1.6" rx="0.8" fill="#1e3450"/>
<!-- pictures app icon -->
<rect x="228" y="876" width="19.5" height="16" rx="1.5" fill="#f06a5a"/>
<rect x="228" y="889" width="19.5" height="3" fill="#d03070"/>
<circle cx="243" cy="880.5" r="2" fill="#fff"/>
<path d="M228,887H247.5" stroke="#ffd0c0" stroke-width="1"/>
<!-- libreoffice icon in taskbar -->
<path d="M430.5,873.5H439.5L446.5,880.5V893.5H430.5Z" fill="#fbf8f6" stroke="#1a7ac8"/>
<path d="M441.5,873H447V878.5Z" fill="#1a8ad8"/>
<rect x="433" y="882" width="10" height="9" fill="#8ec0e0"/>
<rect x="437" y="882" width="6" height="3.5" fill="#60b8f0"/>
<path d="M436.5,885.5L438.5,883.5L441.5,885.5H443V886.5H437Z" fill="#1a5a50"/>
<!-- tray: eject -->
<rect x="1279.5" y="874" width="15" height="19.7" rx="1.5" fill="#8a8a8a"/>
<path d="M1283,883.5H1291L1287,879.5Z" fill="#3a3a3a"/>
<rect x="1283" y="885" width="8" height="1.3" fill="#3a3a3a"/>
<!-- volume -->
<path d="M1309,881H1312.5L1316.5,877.5V891L1312.5,887.5H1309Z" fill="#1e2226"/>
<path d="M1318.5,880.5A5,5 0 0 1 1318.5,888.5" stroke="#1e2226" stroke-width="1.8" fill="none"/>
<!-- clipboard -->
<rect x="1343.5" y="875" width="17" height="18.5" rx="1" fill="#f0f0f0" stroke="#e8c800" stroke-width="1.6"/>
<rect x="1348" y="873" width="8" height="3" fill="#bbb"/>
<path d="M1350,881L1358,879L1363,886L1360,894L1350,893Z" fill="#fafafa" stroke="#ccc" stroke-width="0.6"/>
<!-- network -->
<path d="M1378.5,877H1383V873.5L1390,878.5L1383,883.5V880H1378.5Z" fill="#5c6270"/>
<path d="M1381.5,884H1377V880.5L1370,885.5L1377,890.5V887H1381.5Z" fill="#5c6270"/>
<path d="M1385,889.5L1390,894.5M1390,889.5L1385,894.5" stroke="#d8dce4" stroke-width="2"/>

<!--ICONS5-->
</svg>
</div>
</body></html>
